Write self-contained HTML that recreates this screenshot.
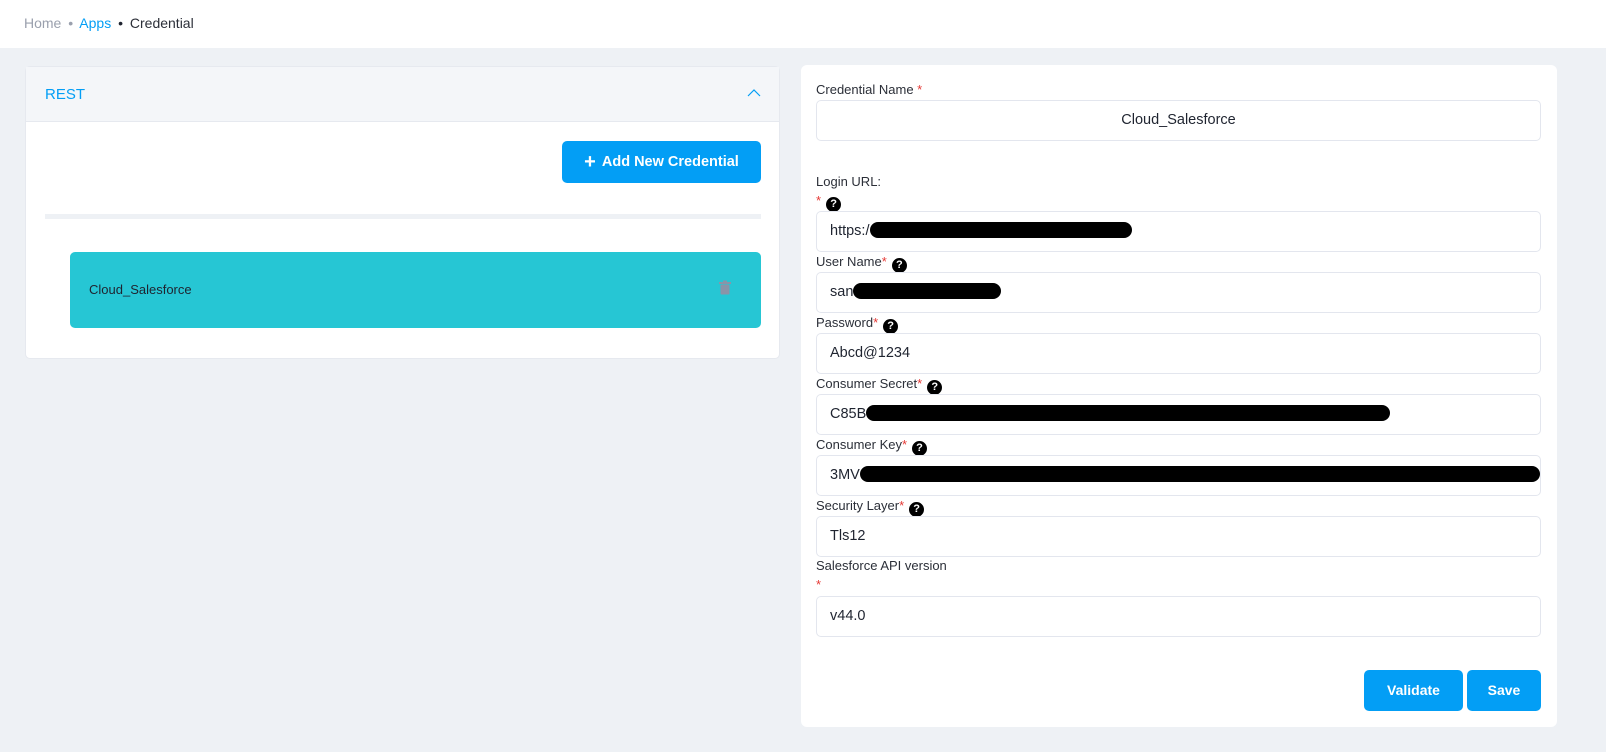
<!DOCTYPE html>
<html><head><meta charset="utf-8"><style>
*{box-sizing:border-box;margin:0;padding:0}
body{width:1606px;height:752px;background:#eef1f5;font-family:"Liberation Sans",sans-serif;position:relative;overflow:hidden;color:#1f2430}
.a{position:absolute}
.top{left:0;top:0;width:1606px;height:48px;background:#fff}
.lbl{font-size:13px;color:#2b2f38;left:816px}
.req{color:#e53935}
.q{display:inline-block;width:15px;height:15px;border-radius:50%;background:#000;color:#fff;font-size:11px;font-weight:bold;text-align:center;line-height:15px;vertical-align:-2px;margin-left:5px}
.inp{left:816px;width:725px;height:41px;border:1px solid #e3e6ee;border-radius:5px;background:#fff;font-size:14.5px;color:#1f2430;padding:0 13px;line-height:39px;overflow:hidden;white-space:nowrap}
.red{display:inline-block;background:#000;border-radius:9px;height:16px;vertical-align:-3px}
.btn{background:#039ef5;color:#fff;border-radius:5px;font-weight:bold;font-size:14px;text-align:center}
</style></head><body>
<div class="a top"></div>
<div class="a" style="left:24px;top:15px;font-size:14px"><span style="color:#9aa0ad">Home</span> <span style="color:#9aa0ad;margin:0 3px">•</span> <span style="color:#039ef5">Apps</span> <span style="margin:0 3px">•</span> <span style="color:#2b2f38">Credential</span></div>

<div class="a" style="left:25px;top:66px;width:755px;height:293px;background:#fff;border:1px solid #e6e9ef;border-radius:5px"></div>
<div class="a" style="left:26px;top:67px;width:753px;height:55px;background:#f4f6f9;border-bottom:1px solid #e6e9ef"></div>
<div class="a" style="left:45px;top:86px;font-size:15px;color:#039ef5">REST</div>
<svg class="a" style="left:746px;top:88px" width="16" height="10" viewBox="0 0 16 10"><path d="M2 8 L8 2 L14 8" fill="none" stroke="#039ef5" stroke-width="1.2"/></svg>
<div class="a btn" style="left:562px;top:141px;width:199px;height:42px;line-height:42px;font-size:14.5px"><span style="font-size:20px;vertical-align:-2px;margin-right:6px">+</span>Add New Credential</div>
<div class="a" style="left:45px;top:214px;width:716px;height:5px;background:#eef1f5"></div>
<div class="a" style="left:70px;top:252px;width:691px;height:76px;background:#26c6d4;border-radius:5px"></div>
<div class="a" style="left:89px;top:282px;font-size:13px;color:#1f2430">Cloud_Salesforce</div>
<svg class="a" style="left:718px;top:280px" width="14" height="15" viewBox="0 0 14 15"><rect x="1" y="2" width="12" height="2" fill="#8a94a8"/><rect x="5" y="0.5" width="4" height="2" fill="#8a94a8"/><rect x="2.5" y="4.5" width="9" height="10" rx="1" fill="#8a94a8"/></svg>

<div class="a" style="left:801px;top:65px;width:756px;height:662px;background:#fff;border-radius:6px"></div>
<div class="a lbl" style="top:82px">Credential Name <span class="req">*</span></div>
<div class="a inp" style="top:100px;text-align:center">Cloud_Salesforce</div>
<div class="a lbl" style="top:174px">Login URL:</div>
<div class="a lbl" style="top:193px"><span class="req">*</span><span class="q">?</span></div>
<div class="a inp" style="top:211px">https:/<span class="red" style="width:262px"></span></div>
<div class="a lbl" style="top:254px">User Name<span class="req">*</span><span class="q">?</span></div>
<div class="a inp" style="top:272px">san<span class="red" style="width:148px"></span></div>
<div class="a lbl" style="top:315px">Password<span class="req">*</span><span class="q">?</span></div>
<div class="a inp" style="top:333px">Abcd@1234</div>
<div class="a lbl" style="top:376px">Consumer Secret<span class="req">*</span><span class="q">?</span></div>
<div class="a inp" style="top:394px">C85B<span class="red" style="width:524px"></span></div>
<div class="a lbl" style="top:437px">Consumer Key<span class="req">*</span><span class="q">?</span></div>
<div class="a inp" style="top:455px">3MV<span class="red" style="width:680px"></span></div>
<div class="a lbl" style="top:498px">Security Layer<span class="req">*</span><span class="q">?</span></div>
<div class="a inp" style="top:516px">Tls12</div>
<div class="a lbl" style="top:558px">Salesforce API version</div>
<div class="a lbl" style="top:577px"><span class="req">*</span></div>
<div class="a inp" style="top:596px">v44.0</div>
<div class="a btn" style="left:1364px;top:670px;width:99px;height:41px;line-height:41px">Validate</div>
<div class="a btn" style="left:1467px;top:670px;width:74px;height:41px;line-height:41px">Save</div>
</body></html>
